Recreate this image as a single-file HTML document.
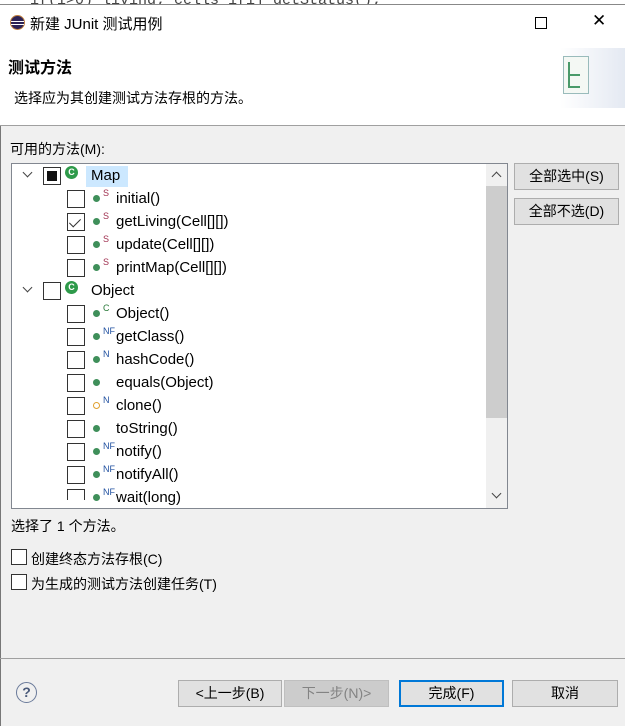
<!DOCTYPE html>
<html><head><meta charset="utf-8"><style>
*{box-sizing:border-box;margin:0;padding:0}
body{width:625px;height:726px;overflow:hidden;background:#f0f0f0;font-family:"Liberation Sans","Noto Sans CJK SC",sans-serif;font-size:14px;color:#000;position:relative}
.a{position:absolute;white-space:nowrap}
.cb{position:absolute;width:18px;height:18px;border:1px solid #333;background:#fff}
.dot{position:absolute;width:7px;height:7px;border-radius:50%;background:#3f8f5a}
.sup{position:absolute;font-size:9px;color:#a03050;line-height:9px}
.supb{color:#2050a0}
.btn{position:absolute;height:27px;border:1px solid #adadad;background:#e1e1e1;text-align:center;line-height:25px;font-size:14px}
.ci{position:absolute;width:13px;height:13px;border-radius:50%;background:#2e9a4a;color:#fff;font-size:9px;font-weight:bold;text-align:center;line-height:13px}
.chev{position:absolute;width:7px;height:7px;border-right:1.5px solid #444;border-bottom:1.5px solid #444;transform:rotate(45deg)}
</style></head><body>
<div class="a" style="left:0;top:0;width:625px;height:5px;background:#fff"></div>
<div class="a" style="left:30px;top:-8px;font-family:'Liberation Mono',monospace;font-size:15px;color:#444">if(i>0) living; cells 1[i] getStatus();</div>
<div class="a" style="left:0;top:4px;width:625px;height:122px;background:#fff;border-top:1px solid #888"></div>
<div class="a" style="left:10px;top:15px;width:15px;height:15px;border-radius:50%;background:#2c2255;border:1px solid #c08040"></div>
<div class="a" style="left:11px;top:21px;width:13px;height:1px;background:#fff"></div>
<div class="a" style="left:11px;top:24px;width:13px;height:1px;background:#fff"></div>
<div class="a" style="left:30px;top:13px;font-size:15px">新建 JUnit 测试用例</div>
<div class="a" style="left:535px;top:17px;width:12px;height:12px;border:1px solid #000"></div>
<div class="a" style="left:592px;top:11px;font-size:17px;font-weight:300">✕</div>
<div class="a" style="left:8px;top:54px;font-size:16px;font-weight:bold">测试方法</div>
<div class="a" style="left:14px;top:88px;font-size:14px">选择应为其创建测试方法存根的方法。</div>
<div class="a" style="left:560px;top:48px;width:65px;height:60px;background:linear-gradient(90deg,#fff,#e4e9f2)"></div>
<div class="a" style="left:563px;top:56px;width:26px;height:38px;border:1px solid #9bb;background:#f4f8f4"></div>
<div class="a" style="left:568px;top:62px;width:2px;height:26px;background:#4a9a6a"></div>
<div class="a" style="left:568px;top:74px;width:12px;height:2px;background:#4a9a6a"></div>
<div class="a" style="left:568px;top:86px;width:12px;height:2px;background:#4a9a6a"></div>
<div class="a" style="left:0;top:125px;width:625px;height:1px;background:#a0a0a0"></div>
<div class="a" style="left:0;top:126px;width:1px;height:600px;background:#777"></div>
<div class="a" style="left:10px;top:139px">可用的方法(M):</div>
<div class="a" style="left:11px;top:163px;width:497px;height:346px;border:1px solid #828790;background:#fff;overflow:hidden">
<div class="a" style="left:474px;top:0;width:21px;height:344px;background:#f0f0f0"></div>
<div class="a" style="left:474px;top:22px;width:21px;height:232px;background:#cdcdcd"></div>
<div class="chev" style="left:481px;top:9px;transform:rotate(225deg)"></div>
<div class="chev" style="left:481px;top:326px"></div>
</div>
<div id="rows"></div>
<div class="btn" style="left:514px;top:163px;width:105px">全部选中(S)</div>
<div class="btn" style="left:514px;top:198px;width:105px">全部不选(D)</div>
<div class="a" style="left:11px;top:516px">选择了 1 个方法。</div>
<div class="cb" style="left:11px;top:549px;width:16px;height:16px"></div>
<div class="a" style="left:31px;top:549px">创建终态方法存根(C)</div>
<div class="cb" style="left:11px;top:574px;width:16px;height:16px"></div>
<div class="a" style="left:31px;top:574px">为生成的测试方法创建任务(T)</div>
<div class="a" style="left:0;top:658px;width:625px;height:1px;background:#a0a0a0"></div>
<div class="a" style="left:16px;top:682px;width:21px;height:21px;border-radius:50%;border:1.5px solid #6a7a9a;text-align:center;line-height:18px;font-size:14px;color:#4a5a7a;font-weight:bold">?</div>
<div class="btn" style="left:178px;top:680px;width:104px">&lt;上一步(B)</div>
<div class="btn" style="left:284px;top:680px;width:105px;background:#cccccc;color:#838383;border-color:#bfbfbf">下一步(N)&gt;</div>
<div class="btn" style="left:399px;top:680px;width:105px;border:2px solid #0078d7;line-height:23px">完成(F)</div>
<div class="btn" style="left:512px;top:680px;width:106px">取消</div>
<script>
var rows=[
[0,'Map','C',1],[1,'initial()','S'],[1,'getLiving(Cell[][])','S',0,1],[1,'update(Cell[][])','S'],[1,'printMap(Cell[][])','S'],
[0,'Object','C'],[1,'Object()','c'],[1,'getClass()','NF'],[1,'hashCode()','N'],[1,'equals(Object)',''],[1,'clone()','N',0,0,1],[1,'toString()',''],[1,'notify()','NF'],[1,'notifyAll()','NF'],[1,'wait(long)','NF']];
var h='';
rows.forEach(function(r,i){var y=175+i*23;
if(r[0]==0){h+='<div class="chev" style="left:24px;top:'+(y-6)+'px"></div>';
h+='<div class="cb" style="left:43px;top:'+(y-8)+'px">'+(r[3]?'<div style="position:absolute;left:3px;top:3px;width:10px;height:10px;background:#111"></div>':'')+'</div>';
h+='<div class="ci" style="left:65px;top:'+(y-9)+'px">C</div>';
if(r[3])h+='<div class="a" style="left:86px;top:'+(y-9)+'px;width:42px;height:21px;background:#cce8ff"></div>';
h+='<div class="a" style="left:91px;top:'+(y-8)+'px;font-size:15px">'+r[1]+'</div>';}
else{h+='<div class="cb" style="left:67px;top:'+(y-8)+'px;'+(y>490?'height:11px;border-bottom:none':'')+'">'+(r[4]?'<div style="position:absolute;left:4px;top:2px;width:6px;height:11px;border-right:1.5px solid #333;border-bottom:1.5px solid #333;transform:rotate(45deg)"></div>':'')+'</div>';
h+='<div class="dot" style="left:93px;top:'+(y-3)+'px;'+(r[5]?'background:#fff;border:1.5px solid #e0a030':'')+'"></div>';
if(r[2])h+='<div class="sup'+(r[2]=='S'?'':' supb')+'" style="left:103px;top:'+(y-9)+'px;'+(r[2]=='c'?'color:#2a7a3a':'')+'">'+r[2].toUpperCase()+'</div>';
h+='<div class="a" style="left:116px;top:'+(y-8)+'px;font-size:15px">'+r[1]+'</div>';}
});
document.getElementById('rows').innerHTML=h;
</script>
</body></html>
